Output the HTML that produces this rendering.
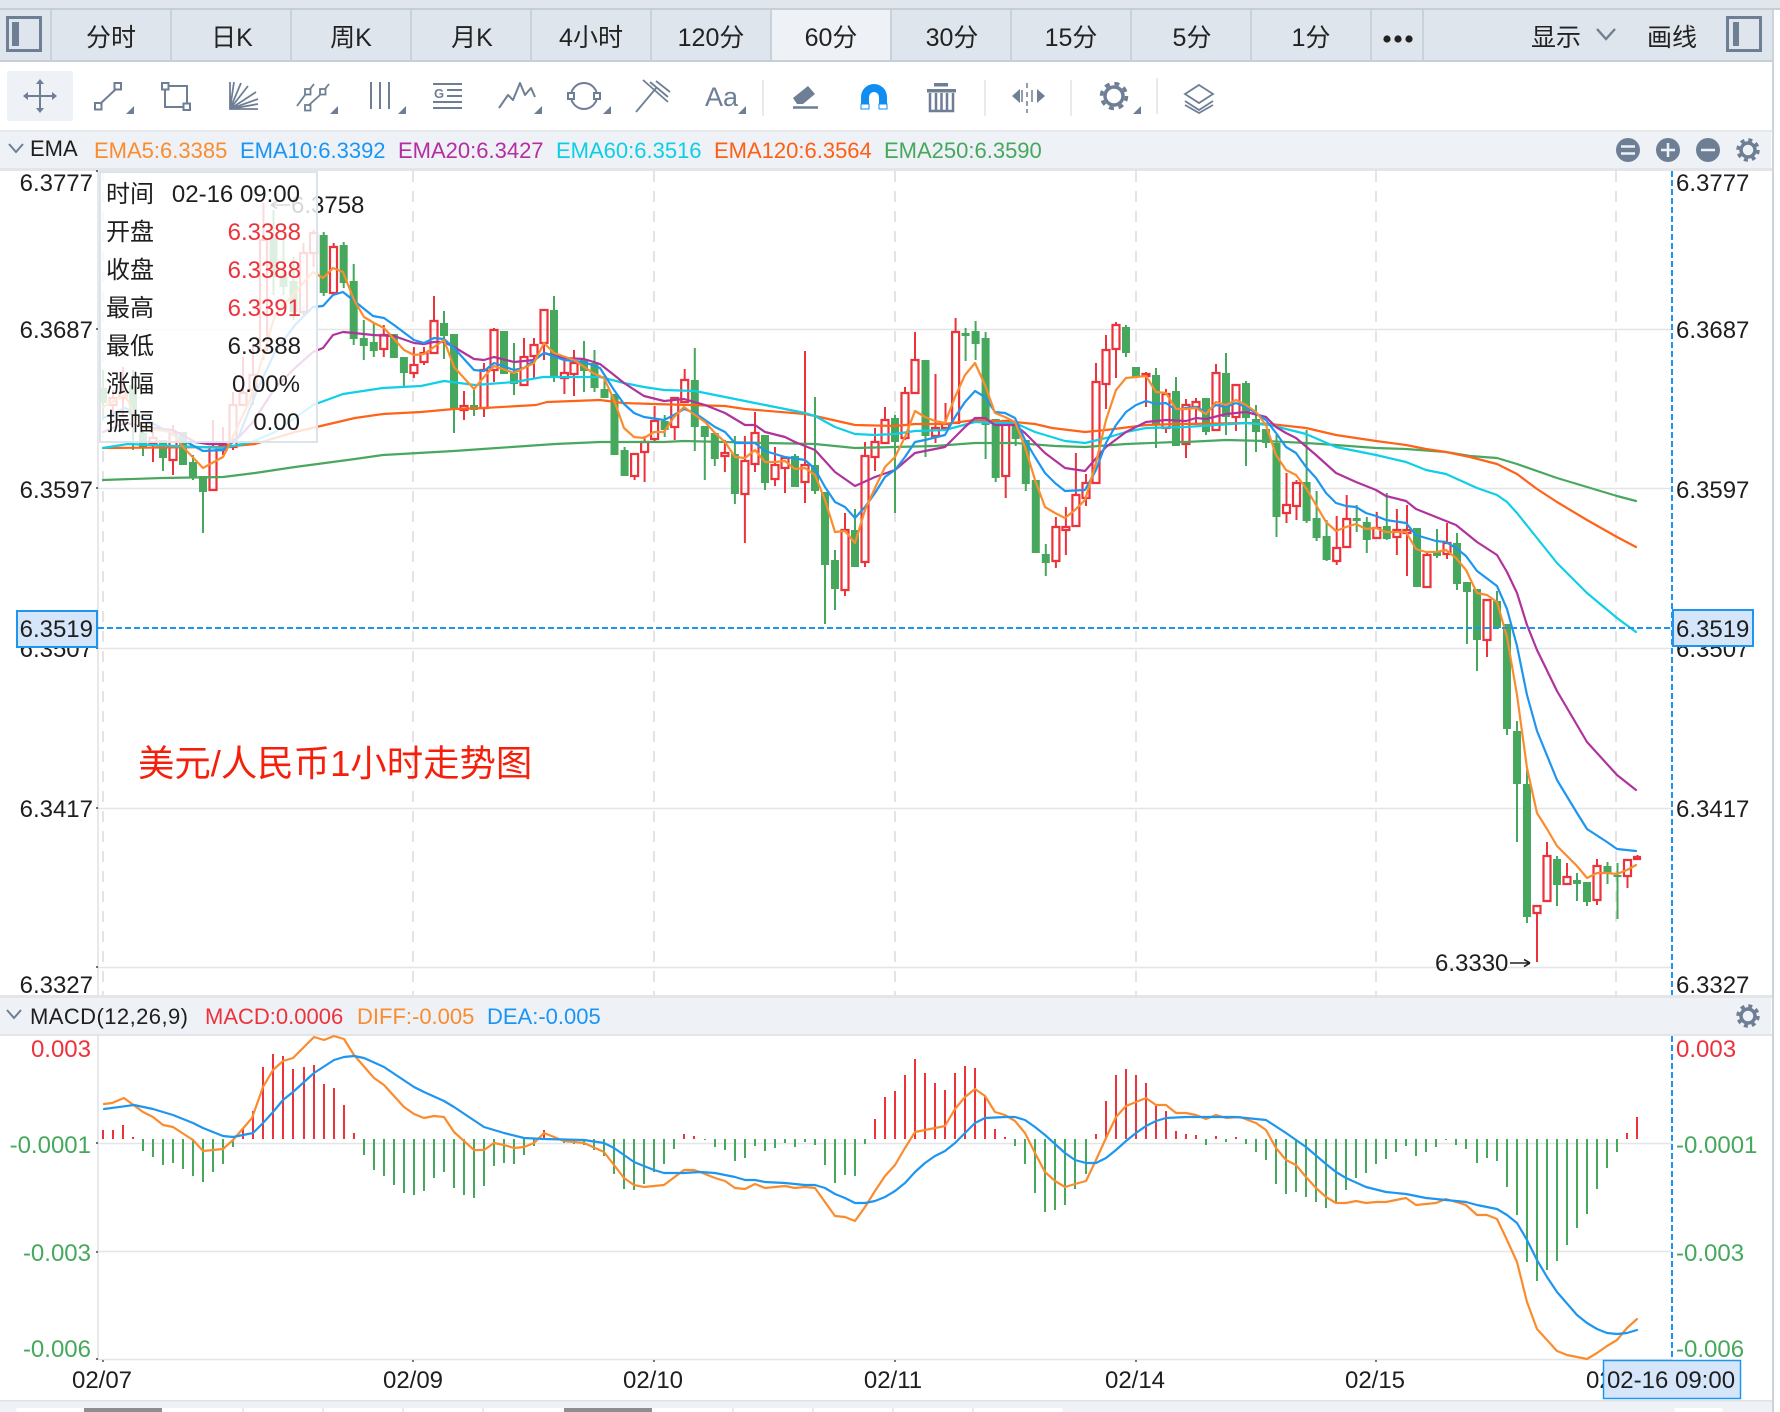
<!DOCTYPE html>
<html><head><meta charset="utf-8"><title>USD/CNY</title>
<style>
html,body{margin:0;padding:0;background:#fff;width:1780px;height:1412px;overflow:hidden}
svg{display:block}
text{font-family:"Liberation Sans","Noto Sans CJK SC",sans-serif;font-size:24px;fill:#1e1e1e}
.t{font-size:25px;text-anchor:middle;fill:#222}
.l{font-size:22px}
.r{fill:#ec333c}.g{fill:#46a85c}
.e{text-anchor:end}
.m{text-anchor:middle}
.i{fill:none;stroke:#6e7f95;stroke-width:2}
.f{fill:#6e7f95}
.ln{fill:none;stroke-width:2.2;stroke-linejoin:round;stroke-linecap:round}
</style></head><body>
<svg width="1780" height="1412" viewBox="0 0 1780 1412" xmlns="http://www.w3.org/2000/svg">
<!-- top strip + tabs -->
<rect x="0" y="0" width="1780" height="8" fill="#e1e6ec"/>
<rect x="0" y="8" width="1780" height="2" fill="#c6ced7"/>
<rect x="0" y="10" width="1772" height="50" fill="#dfe5ec"/>
<rect x="771" y="10" width="120" height="50" fill="#eef1f6"/>
<rect x="0" y="60" width="1772" height="2" fill="#c6ced7"/>
<path d="M51 10V60M171 10V60M291 10V60M411 10V60M531 10V60M651 10V60M771 10V60M891 10V60M1011 10V60M1131 10V60M1251 10V60M1371 10V60M1423 10V60" stroke="#c9d1d9" stroke-width="2" fill="none"/>
<rect x="7.5" y="17.5" width="33" height="33" fill="none" stroke="#6e7f95" stroke-width="3"/><rect x="12" y="22" width="7" height="24" class="f"/>
<rect x="1727.5" y="17.5" width="33" height="33" fill="none" stroke="#6e7f95" stroke-width="3"/><rect x="1733" y="22" width="6" height="24" class="f"/>
<g>
<text class="t" x="111" y="46">分时</text><text class="t" x="232" y="46">日K</text><text class="t" x="351" y="46">周K</text><text class="t" x="472" y="46">月K</text><text class="t" x="591" y="46">4小时</text><text class="t" x="711" y="46">120分</text><text class="t" x="831" y="46">60分</text><text class="t" x="952" y="46">30分</text><text class="t" x="1071" y="46">15分</text><text class="t" x="1192" y="46">5分</text><text class="t" x="1311" y="46">1分</text><text class="t" x="1556" y="46">显示</text><text class="t" x="1672" y="46">画线</text>
</g>
<circle cx="1387" cy="39" r="3.6" fill="#222"/><circle cx="1398" cy="39" r="3.6" fill="#222"/><circle cx="1409" cy="39" r="3.6" fill="#222"/>
<path d="M1597 29l9 10 9-10" fill="none" stroke="#6e7f95" stroke-width="2.4"/>
<!-- toolbar -->
<rect x="7" y="71" width="66" height="50" rx="3" fill="#eef1f6"/>
<g class="i">
<path d="M40 82V112M25 96H55"/>
<path d="M23 96l5-4v8zM57 96l-5-4v8zM40 79l-4 5h8zM40 113l-4-5h8z" class="f" stroke="none"/>
<rect x="95" y="103" width="6.5" height="6.5"/><rect x="114.5" y="83" width="6.5" height="6.5"/><path d="M100 104L116 89"/>
<rect x="162" y="83" width="6.5" height="6.5"/><rect x="183.500" y="103.500" width="6.500" height="6.500"/><path d="M168.500 86H187V103.500M165 90V107H183.500"/>
<path d="M230 82V109H258M230 109L234 82M230 109L241 83M230 109L248 86M230 109L256 92M230 109L258 99M230 109L258 104" stroke-width="1.800"/>
<rect x="305" y="89" width="5.500" height="5.500" stroke-width="1.800"/><rect x="320" y="89" width="5.500" height="5.500" stroke-width="1.800"/><rect x="305" y="105" width="5.500" height="5.500" stroke-width="1.800"/><path d="M297 106L305 95M310 89L314 84M309 105L320 95M325 89L329 84" stroke-width="1.800"/>
<path d="M371 82V109M380 82V109M389 82V109"/>
<path d="M433 84H462M447 90H462M447 96H462M433 102H462M433 108H462" stroke-width="2"/>
<path d="M499 108L508 95L513 100L520 83L525 95L531 88L535 97" stroke-linejoin="round"/>
<circle cx="584" cy="96" r="13"/><rect x="568" y="93" width="6" height="6" fill="#fff"/><rect x="594" y="93" width="6" height="6" fill="#fff"/>
<path d="M636 112L657 87M643 80L668 102M650 82L668 97M656 81L670 92" stroke-width="1.800"/>
<path d="M793 107.500H818" stroke-width="2.500"/>
</g>
<text x="705" y="106" style="font-size:27px;fill:#6e7f95">Aa</text>
<text x="434" y="98" style="font-size:13px;font-weight:bold;fill:#6e7f95">G</text>
<path d="M126 114l8-8v8zM330 114l8-8v8zM398 114l8-8v8zM534 114l8-8v8zM603 114l8-8v8zM738 114l8-8v8zM1133 114l8-8v8z" class="f"/>
<path d="M763 80V116M985 80V116M1071 80V116M1157 78V114" stroke="#e0e3e7" stroke-width="1.500"/>
<path d="M808 86L815 94L803 104H797L793 98Z" class="f"/>
<path d="M861 109V97a13 13 0 0 1 26 0V109H879V97a5 5 0 0 0-10 0V109Z" fill="#0e8ef2"/><path d="M861 104H869V109H861ZM879 104H887V109H879Z" fill="#fff" stroke="#0e8ef2" stroke-width="1"/>
<g fill="#6e7f95"><rect x="934" y="83" width="14" height="3.500"/><rect x="927" y="89" width="29" height="3.500"/></g>
<path d="M930 93V111H953V93M936 93V110M941.500 93V110M947 93V110" fill="none" stroke="#6e7f95" stroke-width="2.500"/>
<path d="M1027 83V88M1027 92V97M1027 101V106M1027 109V113M1022 90V102M1032 90V102" stroke="#6e7f95" stroke-width="1.500" fill="none"/>
<path d="M1012 96L1020 89V103ZM1045 96L1037 89V103Z" class="f"/>
<g transform="translate(1114 96)"><circle r="9" fill="none" stroke="#6e7f95" stroke-width="3.500"/><circle r="12.500" fill="none" stroke="#6e7f95" stroke-width="3.500" stroke-dasharray="5 4.820"/></g>
<path d="M1199 85L1213 94L1199 103L1185 94ZM1185 101L1199 110L1213 101M1185 105L1199 113L1213 105" fill="none" stroke="#6e7f95" stroke-width="1.800"/>
<!-- EMA bar -->
<rect x="0" y="130" width="1772" height="2" fill="#e6e8eb"/>
<rect x="0" y="132" width="1771" height="36" fill="#eef1f6"/>
<rect x="0" y="168" width="1772" height="3" fill="#e3e5e8"/>
<path d="M9 144l7 8 7-8" fill="none" stroke="#6e7f95" stroke-width="2"/>
<text class="l" x="30" y="156">EMA</text>
<text class="l" x="94" y="158" style="fill:#fb8c2e">EMA5:6.3385</text>
<text class="l" x="240" y="158" style="fill:#1996f5">EMA10:6.3392</text>
<text class="l" x="398" y="158" style="fill:#b42ea0">EMA20:6.3427</text>
<text class="l" x="556" y="158" style="fill:#0ccfe5">EMA60:6.3516</text>
<text class="l" x="714" y="158" style="fill:#ff5f14">EMA120:6.3564</text>
<text class="l" x="884" y="158" style="fill:#45a85c">EMA250:6.3590</text>
<circle cx="1628" cy="150" r="12" class="f"/><path d="M1621 146.500h14M1621 153.500h14" stroke="#eef1f6" stroke-width="2.500"/>
<circle cx="1668" cy="150" r="12" class="f"/><path d="M1661 150h14M1668 143v14" stroke="#eef1f6" stroke-width="2.500"/>
<circle cx="1708" cy="150" r="12" class="f"/><path d="M1701 150h14" stroke="#eef1f6" stroke-width="2.500"/>
<g transform="translate(1748 150)"><circle r="7" fill="none" stroke="#6e7f95" stroke-width="3.500"/><circle r="10" fill="none" stroke="#6e7f95" stroke-width="3.500" stroke-dasharray="4 3.850"/></g>
<!-- grid -->
<path d="M98 329.500H1672M98 488.500H1672M98 648.500H1672M98 808.500H1672M98 967.500H1672M98 1143.500H1672M98 1251.500H1672M98 1359.500H1672" stroke="#e4e5e8" stroke-width="1.500"/>
<path d="M98 171V996M98 1036V1360" stroke="#dfe1e5" stroke-width="1.500"/>
<path d="M103 171V996M413 171V996M654 171V996M895 171V996M1136 171V996M1376 171V996M1616 171V996" stroke="#dcdcdc" stroke-width="1.500" stroke-dasharray="11 9" fill="none"/>
<path d="M96 171h2M96 329h2M96 488h2M96 648h2M96 808h2M96 967h2M96 1143h2M96 1252h2M96 1359h2M103 1360v2M413 1360v2M654 1360v2M895 1360v2M1136 1360v2M1376 1360v2" stroke="#222" stroke-width="1.200"/>
<!-- candles green bodies -->
<path fill="none" stroke="#46a85c" stroke-width="8" d="M103 388V403M133 385V415M143 433V448M163 440V458M183 432V465M193 462V478M203 476V492M273.500 238V277M283.500 275V287M293.500 281V312M323.700 235V293M343.700 245V283M353.700 281V339M363.800 338V346M373.800 342V351M393.900 334V358M403.900 357V373M444 323V336M454 334V410M474 405V410M504 331V374M514 373V384M554 310V377M584 360V371M594.500 363V388M604.500 389V398M614.500 394V455M624.600 450V476M664.700 421V430M694.800 380V427M704.800 426V437M714.800 433V459M734.900 454V494M765 435V483M795 456V487M815 465V491M825 492V565M835 560V589M855 530V567M895 418V442M925.500 360V436M965.600 333V336M975.600 331V344M985.600 338V425M995.700 419V478M1015.700 424V439M1025.800 440V484M1035.800 480V553M1045.800 554V563M1126 327V353M1136 367V377M1156 375V425M1176 391V446M1206 398V432M1226 373V417M1246 383V418M1256 419V432M1266 429V443M1276.500 443V517M1306.600 482V521M1316.600 518V538M1326.600 536V560M1356.700 518V521M1366.800 522V540M1386.800 526V539M1417 528V587M1437 552V556M1457 543V584M1467 582V592M1477 589V640M1497 601V628M1507 624V729M1517 731V784M1527 784V917M1557 859V885M1577 880V884M1587 882V902M1607.500 866V873M1617.500 875V877"/>
<!-- green wicks -->
<path fill="none" stroke="#46a85c" stroke-width="2" d="M103 370V420M133 370V450M143 425V456M163 440V471M193 455V480M203 476V533M273.500 210V295M283.500 238V295M293.500 257V320M323.700 232V296M343.700 242V288M353.700 264V345M363.800 320V360M373.800 323V357M403.900 357V388M444 311V359M454 334V433M474 387V416M514 343V395M554 296V382M584 341V392M594.500 350V392M604.500 375V398M624.600 447V476M664.700 415V437M694.800 348V451M704.800 426V480M714.800 433V466M734.900 436V504M765 435V490M795 454V487M815 397V494M825 492V624M835 550V610M855 509V567M895 415V513M925.500 360V457M965.600 328V361M975.600 321V360M985.600 332V459M995.700 419V482M1015.700 424V446M1025.800 440V491M1045.800 544V576M1126 325V357M1156 368V448M1176 377V446M1206 398V435M1226 353V435M1246 381V466M1256 405V452M1266 429V448M1276.500 435V537M1306.600 430V523M1316.600 491V541M1326.600 520V561M1356.700 505V532M1366.800 517V553M1386.800 493V540M1437 529V558M1457 533V590M1467 582V644M1477 589V671M1497 591V628M1507 624V735M1517 721V842M1527 770V923M1557 856V906M1577 873V901M1587 882V906M1607.500 862V884M1617.500 863V919"/>
<!-- red wicks + hollow -->
<path fill="none" stroke="#ec333c" stroke-width="2" d="M113 390V398M113 405V413M123 367V392M123 398V415M153 432V437M153 444V462M173 425V433M173 460V475M213 420V447M223 427V445M223 450V455M233 392V405M233 447V450M243 357V393M253 347V375M253 390V405M263.500 203V240M263.500 350V360M303.500 243V253M303.500 312V315M313.600 230V233M313.600 253V267M333.700 243V247M383.800 325V335M383.800 349V357M413.900 347V365M413.900 373V378M424 347V353M424 362V365M434 296V321M464 391V406M464 410V420M484 363V370M484 408V417M494 328V330M494 370V382M524 338V357M534 338V345M534 356V378M544 343V360M564.400 357V373M564.400 378V394M574 350V363M574 374V396M634.600 476V480M644.600 436V442M644.600 452V482M654.600 406V421M654.600 439V443M674.700 427V440M684.700 369V380M724.900 440V453M724.900 456V472M744.900 436V461M744.900 494V543M755 412V433M755 464V472M775 447V465M775 479V486M785 468V493M805 351V465M805 482V503M845 513V530M845 590V596M865 442V456M865 562V567M875 428V442M875 457V471M885 407V420M905 387V393M905 438V440M915 332V360M935.500 374V428M935.500 436V443M945.500 403V424M955.600 318V332M1005.700 476V498M1055.900 517V527M1055.900 561V568M1065.900 507V527M1065.900 530V555M1075.900 453V495M1086 474V483M1086 498V506M1096 363V382M1106 335V350M1106 384V409M1116 322V325M1116 349V378M1146 372V374M1146 376V407M1166 389V394M1166 428V433M1186 399V405M1186 444V458M1196 398V402M1196 407V425M1216 364V373M1236 417V431M1286.500 473V505M1286.500 513V523M1296.500 480V483M1296.500 506V520M1336.700 516V548M1336.700 561V565M1346.700 495V519M1376.800 512V528M1396.900 509V530M1396.900 537V555M1407 505V530M1407 533V576M1427 552V555M1447 523V543M1447 554V559M1487 640V657M1537 913V962M1547 842V856M1567 863V877M1597 859V866M1597 900V905M1627.500 876V888M1637.500 855V857"/>
<path fill="none" stroke="#ec333c" stroke-width="2.200" d="M109.500 398h7v7h-7zM119.500 392h7v6h-7zM149.500 438h7v6h-7zM169.500 433h7v27h-7zM209.500 447h7v43h-7zM219.500 445h7v5h-7zM229.500 405h7v42h-7zM239.500 393h7v12h-7zM249.500 375h7v15h-7zM260 240h7v110h-7zM300 253h7v59h-7zM310 233h7v20h-7zM330 247h7v46h-7zM380.300 335h7v14h-7zM410.400 365h7v8h-7zM420.500 353h7v9h-7zM430.500 321h7v32h-7zM460.500 406h7v4h-7zM480.500 370h7v38h-7zM490.500 330h7v40h-7zM520.500 357h7v28h-7zM530.500 345h7v11h-7zM540.500 310h7v33h-7zM560.900 373h7v5h-7zM570.500 363h7v11h-7zM631.100 454h7v22h-7zM641.100 442h7v10h-7zM651.100 421h7v18h-7zM671.200 398h7v29h-7zM681.200 380h7v22h-7zM721.400 453h7v3h-7zM741.400 461h7v33h-7zM751.500 433h7v31h-7zM771.500 465h7v14h-7zM781.500 458h7v10h-7zM801.500 465h7v17h-7zM841.500 530h7v60h-7zM861.500 456h7v106h-7zM871.500 442h7v15h-7zM881.500 420h7v23h-7zM901.500 393h7v45h-7zM911.500 360h7v33h-7zM932 428h7v8h-7zM942 424h7v4h-7zM952.100 332h7v91h-7zM1002.200 421h7v55h-7zM1052.400 527h7v34h-7zM1062.400 527h7v3h-7zM1072.400 495h7v31h-7zM1082.500 483h7v15h-7zM1092.500 382h7v101h-7zM1102.500 350h7v34h-7zM1112.500 325h7v24h-7zM1142.500 374h7v2h-7zM1162.500 394h7v34h-7zM1182.500 405h7v39h-7zM1192.500 402h7v5h-7zM1212.500 373h7v57h-7zM1232.500 385h7v32h-7zM1283 505h7v8h-7zM1293 483h7v23h-7zM1333.200 548h7v13h-7zM1343.200 519h7v28h-7zM1373.300 528h7v10h-7zM1393.400 530h7v7h-7zM1403.500 530h7v3h-7zM1423.500 555h7v32h-7zM1443.500 543h7v11h-7zM1483.500 600h7v40h-7zM1533.500 906h7v7h-7zM1543.500 856h7v45h-7zM1563.500 877h7v7h-7zM1593.500 866h7v34h-7zM1624 860h7v16h-7zM1634 857h6v2h-6z"/>
<!-- EMA lines -->
<path class="ln" stroke="#4aa75f" d="M103 480L162 478L223 477L255 473L295 467L355 459L383 455L454 451L497 448L555 444L600 442L619 442L664 442L684 441L765 443L815 444L855 448L935 446L975 443L1015 443L1055 446L1085 447L1126 444L1176 442L1186 442L1226 440L1266 441L1306 443L1336 445L1376 448L1406 449L1446 452L1470 456L1497 458L1517 464L1557 478L1607 493L1617 496L1636 501"/>
<path class="ln" stroke="#ff6318" d="M103 448L223 447L255 444L295 432L355 418L383 414L421 412L454 409L484 408L536 405L547 402L600 400L623 403L654 404L725 406L745 409L805 414L815 416L855 425L895 426L915 424L945 424L975 420L1015 422L1035 424L1052 428L1085 432L1106 430L1146 425L1176 424L1186 424L1246 423L1270 424L1306 428L1336 435L1376 441L1406 445L1426 449L1446 452L1470 457L1497 464L1517 474L1537 489L1557 502L1587 520L1617 537L1636 547"/>
<path class="ln" stroke="#0dcfe8" d="M103 448L128 444L223 448L252 442L275 432L295 418L313 405L343 394L383 388L421 386L444 381L475 385L515 382L543 377L600 377L624 383L644 387L664 390L695 391L725 397L745 401L765 405L805 413L815 416L835 427L855 434L875 435L895 434L915 431L945 430L975 422L995 423L1015 423L1035 432L1065 441L1085 443L1106 438L1126 432L1146 428L1186 427L1246 423L1270 425L1306 434L1336 447L1376 455L1406 462L1426 470L1446 474L1477 488L1497 495L1507 502L1517 513L1537 538L1557 563L1587 593L1617 618L1636 632"/>
<path class="ln" stroke="#b0339c" d="M103 432L125 423L152 428L173 430L195 442L208 444L223 444L238 438L253 422L275 388L295 368L313 352L323 348L333 335L343 332L354 333L373 335L394 336L414 343L424 344L434 342L444 342L454 347L474 359L484 360L494 357L514 362L534 360L544 353L564 358L584 359L600 364L614 375L624 383L644 396L664 401L684 399L705 405L725 413L745 425L755 425L765 432L785 437L795 442L815 450L835 472L855 486L875 477L895 470L915 453L935 449L945 447L965 427L975 418L985 418L995 425L1015 425L1025 433L1045 453L1065 468L1085 471L1106 447L1126 432L1146 422L1166 420L1186 421L1196 418L1206 419L1226 414L1246 412L1266 417L1276 427L1286 433L1296 438L1316 455L1336 473L1356 482L1376 490L1386 496L1406 501L1416 509L1436 517L1456 525L1477 542L1497 555L1507 572L1517 593L1527 625L1537 650L1557 691L1587 742L1617 775L1636 790"/>
<path class="ln" stroke="#1e96f0" d="M103 418L125 408L152 423L203 451L223 450L238 438L258 388L275 352L295 325L313 307L323 306L333 295L343 292L353 300L373 316L384 318L394 325L414 340L424 343L434 338L444 339L454 348L474 370L484 371L494 363L514 370L524 368L544 353L564 360L584 362L600 368L614 390L624 404L634 413L644 417L664 420L674 415L684 409L695 413L715 427L725 432L735 443L755 443L765 451L785 457L805 460L815 469L825 487L835 502L845 507L855 518L865 507L875 493L885 477L895 470L905 457L915 442L925 440L945 435L955 417L965 402L975 391L985 397L995 412L1005 413L1015 418L1025 440L1035 457L1045 473L1055 483L1065 491L1085 490L1096 470L1106 443L1116 425L1126 412L1136 405L1146 401L1156 404L1166 403L1176 410L1186 408L1196 407L1206 412L1216 405L1226 407L1236 403L1246 407L1256 413L1266 420L1276 433L1286 447L1296 453L1306 467L1316 478L1326 493L1336 503L1346 506L1356 507L1366 513L1376 516L1386 520L1406 523L1416 535L1426 538L1436 541L1446 542L1456 548L1466 556L1477 571L1497 586L1507 609L1517 646L1527 695L1537 731L1557 780L1577 813L1587 829L1607 842L1617 849L1636 851"/>
<path class="ln" stroke="#fb8c2e" d="M103 407L125 395L142 428L172 432L183 447L203 468L223 457L228 447L250 400L275 315L313 272L323 278L333 268L343 272L354 300L364 317L374 323L384 328L404 350L414 355L424 354L444 340L454 367L474 389L484 377L494 366L514 373L534 363L544 343L554 353L574 360L593 373L604 378L614 400L624 428L634 437L644 438L654 432L664 432L674 417L684 407L695 415L705 422L715 433L725 442L735 457L745 458L755 450L765 462L775 462L785 461L795 469L805 468L815 475L825 500L835 532L845 531L855 543L865 510L875 488L885 467L895 457L905 437L915 411L925 417L935 421L945 423L955 397L965 375L975 363L985 385L995 413L1005 417L1015 422L1025 447L1035 480L1045 507L1055 513L1065 518L1075 510L1085 500L1096 463L1106 420L1116 390L1126 378L1136 377L1146 376L1156 392L1166 393L1176 409L1186 409L1196 408L1206 414L1216 402L1226 405L1236 400L1246 405L1256 412L1266 425L1276 455L1286 470L1296 475L1306 488L1316 505L1326 522L1336 531L1346 527L1356 524L1366 529L1376 528L1386 532L1406 532L1416 549L1426 552L1436 552L1446 550L1456 558L1466 570L1477 593L1487 595L1497 602L1507 637L1517 695L1527 768L1537 813L1547 829L1557 846L1567 856L1577 866L1587 878L1597 873L1607 873L1617 874L1627 870L1636 865"/>
<!-- crosshair -->
<path d="M98 628H1672" stroke="#1e96f0" stroke-width="2" stroke-dasharray="6 3"/>
<path d="M1672 171V996M1672 1036V1360" stroke="#1e96f0" stroke-width="2" stroke-dasharray="6 3"/>
<!-- annotations -->
<text x="291" y="213">6.3758</text>
<path d="M271 205H290M271 205l6-3.500M271 205l6 3.500" fill="none" stroke="#333" stroke-width="1.600"/>
<text x="1435" y="971">6.3330</text>
<path d="M1510 963H1530M1530 963l-6-3.500M1530 963l-6 3.500" fill="none" stroke="#222" stroke-width="1.600"/>
<text x="138" y="776" style="font-size:36.4px;fill:#f4200c">美元/人民币1小时走势图</text>
<!-- tooltip -->
<rect x="100" y="172" width="217" height="270" fill="#fff" fill-opacity=".82" stroke="#dde3ea" stroke-width="2"/>
<text x="106" y="202">时间</text><text x="300" y="202" class="e">02-16 09:00</text>
<text x="106" y="240">开盘</text><text x="301" y="240" class="e r">6.3388</text>
<text x="106" y="278">收盘</text><text x="301" y="278" class="e r">6.3388</text>
<text x="106" y="316">最高</text><text x="301" y="316" class="e r">6.3391</text>
<text x="106" y="354">最低</text><text x="301" y="354" class="e">6.3388</text>
<text x="106" y="392">涨幅</text><text x="300" y="392" class="e">0.00%</text>
<text x="106" y="430">振幅</text><text x="300" y="430" class="e">0.00</text>
<!-- left axis -->
<text x="93" y="191" class="e">6.3777</text>
<text x="93" y="338" class="e">6.3687</text>
<text x="93" y="498" class="e">6.3597</text>
<text x="93" y="657" class="e">6.3507</text>
<text x="93" y="817" class="e">6.3417</text>
<text x="93" y="993" class="e">6.3327</text>
<rect x="17" y="611" width="80" height="36" fill="#d5e6fa" stroke="#1e96f0" stroke-width="2"/>
<text x="93" y="637" class="e">6.3519</text>
<!-- right axis -->
<text x="1676" y="191">6.3777</text>
<text x="1676" y="338">6.3687</text>
<text x="1676" y="498">6.3597</text>
<text x="1676" y="657">6.3507</text>
<text x="1676" y="817">6.3417</text>
<text x="1676" y="993">6.3327</text>
<rect x="1673" y="610" width="80" height="36" fill="#d5e6fa" stroke="#1e96f0" stroke-width="2"/>
<text x="1676" y="637">6.3519</text>
<!-- MACD bar -->
<rect x="0" y="995" width="1772" height="3" fill="#e3e5e8"/>
<rect x="0" y="998" width="1771" height="36" fill="#eef1f6"/>
<rect x="0" y="1034" width="1772" height="2" fill="#e3e5e8"/>
<path d="M7 1010l7 8 7-8" fill="none" stroke="#6e7f95" stroke-width="2"/>
<text class="l" x="30" y="1024" textLength="158" lengthAdjust="spacing">MACD(12,26,9)</text>
<text class="l r" x="205" y="1024">MACD:0.0006</text>
<text class="l" x="357" y="1024" style="fill:#fb8c2e">DIFF:-0.005</text>
<text class="l" x="487" y="1024" style="fill:#1996f5">DEA:-0.005</text>
<g transform="translate(1748 1016)"><circle r="7" fill="none" stroke="#6e7f95" stroke-width="3.500"/><circle r="10" fill="none" stroke="#6e7f95" stroke-width="3.500" stroke-dasharray="4 3.850"/></g>
<!-- MACD hist -->
<path fill="none" stroke="#ec333c" stroke-width="2" d="M103 1139V1130M113 1139V1130M123 1139V1125M133 1139V1137M243 1139V1129M253 1139V1111M263 1139V1067M273 1139V1054M283 1139V1056M293 1139V1069M304 1139V1067M314 1139V1065M324 1139V1084M334 1139V1088M344 1139V1105M354 1139V1133M544 1139V1130M684 1139V1134M694 1139V1136M875 1139V1119M885 1139V1097M895 1139V1091M905 1139V1075M915 1139V1059M925 1139V1073M935 1139V1083M945 1139V1090M955 1139V1073M965 1139V1066M975 1139V1068M985 1139V1096M995 1139V1129M1005 1139V1137M1096 1139V1134M1106 1139V1101M1116 1139V1075M1126 1139V1069M1136 1139V1075M1146 1139V1083M1156 1139V1105M1166 1139V1111M1176 1139V1131M1186 1139V1134M1196 1139V1135M1216 1139V1136M1236 1139V1137M1627 1139V1133M1637 1139V1117"/>
<path fill="none" stroke="#46a85c" stroke-width="2" d="M143 1139V1151M153 1139V1157M163 1139V1165M173 1139V1163M183 1139V1169M193 1139V1176M203 1139V1182M213 1139V1172M223 1139V1164M233 1139V1147M364 1139V1155M374 1139V1170M384 1139V1176M394 1139V1185M404 1139V1193M414 1139V1195M424 1139V1191M434 1139V1178M444 1139V1172M454 1139V1188M464 1139V1195M474 1139V1198M484 1139V1186M494 1139V1166M504 1139V1163M514 1139V1164M524 1139V1155M534 1139V1146M564 1139V1143M574 1139V1144M584 1139V1145M594 1139V1150M604 1139V1156M614 1139V1174M624 1139V1189M634 1139V1190M644 1139V1184M654 1139V1172M664 1139V1164M674 1139V1149M705 1139V1140M715 1139V1147M725 1139V1150M735 1139V1161M745 1139V1158M755 1139V1146M765 1139V1151M775 1139V1148M785 1139V1143M795 1139V1147M805 1139V1142M815 1139V1145M825 1139V1165M835 1139V1183M845 1139V1175M855 1139V1176M865 1139V1144M1015 1139V1146M1025 1139V1164M1035 1139V1193M1045 1139V1212M1055 1139V1210M1065 1139V1205M1075 1139V1189M1086 1139V1174M1206 1139V1145M1226 1139V1142M1246 1139V1144M1256 1139V1152M1266 1139V1160M1276 1139V1184M1286 1139V1194M1296 1139V1192M1306 1139V1197M1316 1139V1202M1326 1139V1208M1336 1139V1203M1346 1139V1190M1356 1139V1178M1366 1139V1173M1376 1139V1164M1386 1139V1159M1396 1139V1152M1406 1139V1146M1416 1139V1156M1426 1139V1152M1436 1139V1147M1446 1139V1140M1456 1139V1145M1466 1139V1149M1477 1139V1163M1487 1139V1158M1497 1139V1161M1507 1139V1187M1517 1139V1215M1527 1139V1262M1537 1139V1281M1547 1139V1270M1557 1139V1261M1567 1139V1245M1577 1139V1228M1587 1139V1214M1597 1139V1189M1607 1139V1168M1617 1139V1152"/>
<path class="ln" stroke="#fb8c2e" d="M104 1104L112 1103L124 1098L143 1112L153 1117L163 1125L173 1127L193 1140L203 1151L223 1149L233 1140L252 1118L263 1087L273 1070L283 1061L293 1058L304 1047L314 1037L324 1040L334 1036L344 1039L354 1055L374 1078L384 1085L404 1107L414 1114L424 1118L434 1116L444 1117L454 1132L474 1150L484 1150L494 1143L504 1145L514 1148L524 1147L534 1143L544 1133L564 1141L584 1143L604 1152L614 1165L624 1178L634 1185L644 1187L654 1186L664 1185L684 1170L694 1170L700 1172L715 1178L725 1181L735 1188L745 1189L755 1184L765 1188L775 1187L785 1186L795 1188L805 1187L815 1188L825 1202L835 1216L845 1217L855 1221L865 1207L875 1191L885 1176L895 1165L905 1148L915 1132L925 1130L935 1128L945 1126L955 1109L965 1097L975 1089L985 1096L995 1112L1005 1115L1015 1121L1025 1133L1035 1153L1045 1172L1055 1181L1065 1187L1075 1184L1086 1181L1096 1160L1106 1138L1116 1117L1126 1106L1136 1102L1146 1098L1156 1105L1166 1105L1176 1113L1186 1113L1196 1115L1206 1119L1216 1115L1226 1118L1240 1117L1256 1123L1266 1130L1276 1148L1286 1160L1296 1165L1306 1177L1316 1188L1326 1197L1336 1203L1346 1203L1356 1201L1366 1203L1376 1202L1386 1202L1396 1200L1406 1198L1416 1205L1436 1203L1446 1199L1466 1205L1477 1215L1487 1215L1497 1219L1507 1240L1517 1262L1527 1302L1537 1329L1547 1340L1557 1351L1567 1355L1577 1357L1587 1359L1597 1353L1607 1346L1617 1340L1627 1328L1637 1319"/>
<path class="ln" stroke="#1e96f0" d="M104 1109L134 1105L153 1109L173 1115L193 1123L203 1128L223 1136L233 1137L253 1133L263 1123L273 1112L283 1100L293 1092L314 1073L334 1060L344 1057L354 1056L364 1058L384 1067L414 1087L424 1092L444 1101L454 1107L484 1127L504 1133L524 1138L544 1139L584 1140L604 1143L614 1148L634 1162L654 1170L664 1173L684 1173L700 1172L715 1173L735 1177L745 1180L755 1180L765 1182L785 1183L805 1185L815 1185L825 1188L835 1194L845 1198L855 1203L865 1203L875 1201L885 1197L895 1191L905 1183L915 1172L925 1163L935 1156L945 1151L955 1143L965 1133L975 1123L985 1118L1005 1117L1015 1117L1025 1120L1035 1127L1045 1135L1055 1144L1065 1153L1075 1160L1086 1163L1096 1163L1106 1158L1116 1150L1126 1141L1136 1133L1146 1126L1156 1121L1166 1118L1186 1117L1236 1117L1266 1120L1286 1133L1306 1147L1326 1164L1336 1172L1346 1178L1366 1187L1386 1192L1406 1194L1426 1198L1446 1200L1466 1202L1477 1205L1497 1209L1507 1215L1517 1223L1527 1240L1537 1260L1547 1277L1557 1292L1577 1315L1587 1323L1597 1329L1607 1333L1617 1334L1627 1333L1637 1330"/>
<!-- MACD axis -->
<text x="91" y="1057" class="e r">0.003</text>
<text x="91" y="1153" class="e g">-0.0001</text>
<text x="91" y="1261" class="e g">-0.003</text>
<text x="91" y="1357" class="e g">-0.006</text>
<text x="1676" y="1057" class="r">0.003</text>
<text x="1676" y="1153" class="g">-0.0001</text>
<text x="1676" y="1261" class="g">-0.003</text>
<text x="1676" y="1357" class="g">-0.006</text>
<!-- dates -->
<text x="102" y="1388" class="m">02/07</text>
<text x="413" y="1388" class="m">02/09</text>
<text x="653" y="1388" class="m">02/10</text>
<text x="893" y="1388" class="m">02/11</text>
<text x="1135" y="1388" class="m">02/14</text>
<text x="1375" y="1388" class="m">02/15</text>
<text x="1616" y="1388" class="m">02/16</text>
<rect x="1603.500" y="1360.500" width="137" height="38" fill="#d5e6fa" stroke="#1e96f0" stroke-width="1.500"/>
<text x="1671" y="1388" class="m">02-16 09:00</text>
<!-- bottom -->
<rect x="0" y="1400" width="1772" height="12" fill="#eef1f6"/>
<rect x="0" y="1400" width="1772" height="1.500" fill="#dfe2e6"/>
<rect x="16" y="1408" width="1047" height="4" rx="2" fill="#fff"/>
<rect x="84" y="1408" width="78" height="4" fill="#8e8e90"/>
<rect x="564" y="1408" width="88" height="4" fill="#8e8e90"/>
<path d="M243 1408v4M323 1408v4M403 1408v4M483 1408v4M733 1408v4M813 1408v4M893 1408v4M973 1408v4" stroke="#dfe2e6" stroke-width="1.500"/>
<rect x="1674" y="1408" width="49" height="4" rx="2" fill="#fff"/>
<!-- right edge -->
<rect x="1772" y="10" width="2" height="1402" fill="#cbd3db"/>
</svg>
</body></html>
